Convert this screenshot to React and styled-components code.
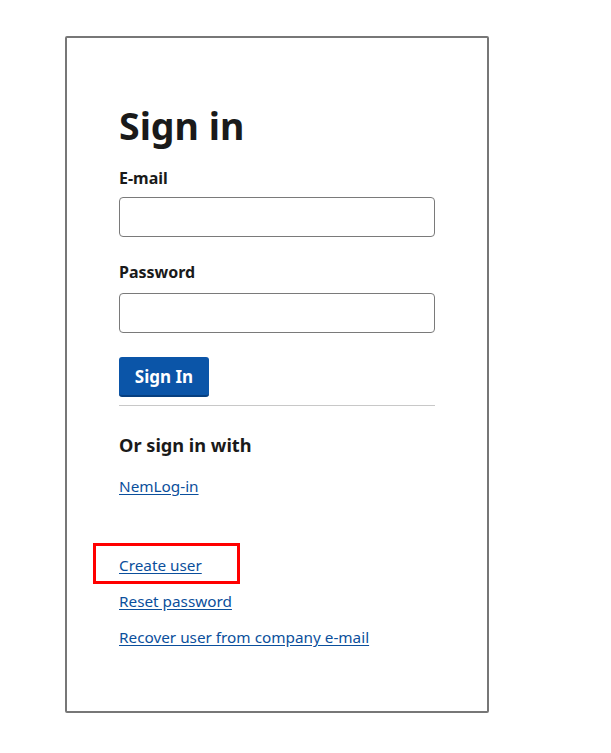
import React from 'react';
import styled, { createGlobalStyle } from 'styled-components';

const Global = createGlobalStyle`
  body {
    margin: 0;
    background: #ffffff;
    font-family: "Noto Sans", "Open Sans", sans-serif;
    color: #1a1a1a;
  }
`;

const Page = styled.div`
  padding: 36px 0 0 65px;
`;

const Card = styled.div`
  box-sizing: border-box;
  width: 424px;
  height: 677px;
  border: 2px solid #777777;
  border-radius: 2px;
  padding: 64px 52px 0;
`;

const Title = styled.h1`
  font-size: 37.5px;
  font-weight: 700;
  line-height: 48px;
  margin: 0 0 17px;
`;

const Field = styled.div`
  display: flex;
  flex-direction: column;
  margin-bottom: 24px;
`;

const Label = styled.label`
  font-size: 16px;
  font-weight: 700;
  line-height: 22px;
  margin-bottom: ${p => p.$gap || 8}px;
`;

const Input = styled.input`
  height: 40px;
  box-sizing: border-box;
  border: 1px solid #7a7a7a;
  border-radius: 4px;
  font: inherit;
  padding: 0 10px;
`;

const Button = styled.button`
  width: 90px;
  height: 40px;
  background: #0b55a8;
  border: none;
  border-bottom: 2px solid #063f80;
  border-radius: 3px;
  color: #ffffff;
  font-family: inherit;
  font-size: 17px;
  font-weight: 700;
  padding: 0;
`;

const Divider = styled.hr`
  border: none;
  border-top: 1px solid #c8c8c8;
  margin: 8px 0 26px;
`;

const SubTitle = styled.h2`
  font-size: 18.2px;
  font-weight: 700;
  line-height: 26px;
  margin: 0 0 17px;
`;

const Links = styled.div`
  display: flex;
  flex-direction: column;
  align-items: flex-start;
  gap: ${p => p.$gap}px;
  margin-top: ${p => p.$top || 0}px;
`;

const Link = styled.a`
  font-size: 15.3px;
  line-height: 22px;
  color: #0b4f9c;
  text-decoration: underline;
  text-underline-offset: 2px;
  position: relative;
  cursor: pointer;
`;

const Highlight = styled.span`
  position: absolute;
  left: -26px;
  top: -11px;
  width: 147px;
  height: 41px;
  border: 3px solid #ff0000;
  box-sizing: border-box;
  pointer-events: none;
`;

export default function App() {
  return (
    <Page>
      <Global />
      <Card>
        <Title>Sign in</Title>
        <Field>
          <Label>E-mail</Label>
          <Input type="email" />
        </Field>
        <Field>
          <Label $gap={10}>Password</Label>
          <Input type="password" />
        </Field>
        <Button>Sign In</Button>
        <Divider />
        <SubTitle>Or sign in with</SubTitle>
        <Links $gap={0}>
          <Link>NemLog-in</Link>
        </Links>
        <Links $gap={14} $top={57}>
          <Link>
            Create user
            <Highlight />
          </Link>
          <Link>Reset password</Link>
          <Link>Recover user from company e-mail</Link>
        </Links>
      </Card>
    </Page>
  );
}
